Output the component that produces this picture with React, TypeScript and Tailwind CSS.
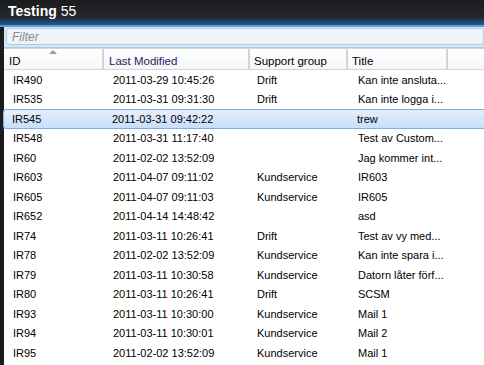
const rows: [string, string, string, string][] = [
  ['IR490', '2011-03-29 10:45:26', 'Drift', 'Kan inte ansluta...'],
  ['IR535', '2011-03-31 09:31:30', 'Drift', 'Kan inte logga i...'],
  ['IR545', '2011-03-31 09:42:22', '', 'trew'],
  ['IR548', '2011-03-31 11:17:40', '', 'Test av Custom...'],
  ['IR60', '2011-02-02 13:52:09', '', 'Jag kommer int...'],
  ['IR603', '2011-04-07 09:11:02', 'Kundservice', 'IR603'],
  ['IR605', '2011-04-07 09:11:03', 'Kundservice', 'IR605'],
  ['IR652', '2011-04-14 14:48:42', '', 'asd'],
  ['IR74', '2011-03-11 10:26:41', 'Drift', 'Test av vy med...'],
  ['IR78', '2011-02-02 13:52:09', 'Kundservice', 'Kan inte spara i...'],
  ['IR79', '2011-03-11 10:30:58', 'Kundservice', 'Datorn låter förf...'],
  ['IR80', '2011-03-11 10:26:41', 'Drift', 'SCSM'],
  ['IR93', '2011-03-11 10:30:00', 'Kundservice', 'Mail 1'],
  ['IR94', '2011-03-11 10:30:01', 'Kundservice', 'Mail 2'],
  ['IR95', '2011-02-02 13:52:09', 'Kundservice', 'Mail 1'],
];

const SELECTED = 'IR545';

export default function App() {
  return (
    <div
      className="w-[484px] h-[365px] overflow-hidden bg-[#1c1c1c] flex flex-col text-[11px] text-black"
      style={{ fontFamily: '"Liberation Sans", Arial, sans-serif' }}
    >
      {/* title bar */}
      <div className="h-[27px] shrink-0 flex items-center pl-[8px] pb-[2px] bg-gradient-to-b from-[#1c1c1c] via-[#24272c] via-70% to-[#1d5aa3] border-b-[2px] border-[#5f9bd3] text-white text-[14px]">
        <span className="font-bold">Testing</span>
        <span className="ml-[4px]">55</span>
      </div>

      <div className="flex-1 ml-[4px] bg-white flex flex-col">
        {/* filter */}
        <div className="h-[21px] shrink-0 bg-[#d6e6f3] pt-[1px] pb-[2px] pl-[2px] border-b border-[#a9cbe6]">
          <div className="h-full rounded-[3px] border border-[#b5cde3] bg-[#edf3f9] flex items-center pl-[5px] italic text-[#8a8a8a] text-[12px]">
            Filter
          </div>
        </div>

        {/* header */}
        <div className="relative h-[22px] shrink-0 flex border-t border-[#7c7c7c] border-b border-[#d5d5d5] bg-gradient-to-b from-white to-[#f4f6f9] text-[11.5px]">
          <div className="absolute left-[45px] top-[1px] w-0 h-0 border-l-[4px] border-r-[4px] border-b-[4px] border-l-transparent border-r-transparent border-b-[#9a9a9a]" />
          <div className="w-[100px] flex items-center pl-[5px] pt-[6px] border-r-[2px] border-[#d3d3d3]">ID</div>
          <div className="w-[146px] flex items-center pl-[5px] pt-[6px] border-r-[2px] border-[#d3d3d3] text-[#2a1a60]">Last Modified</div>
          <div className="w-[98px] flex items-center pl-[4px] pt-[6px] border-r-[2px] border-[#d3d3d3]">Support group</div>
          <div className="w-[100px] flex items-center pl-[4px] pt-[6px] border-r-[2px] border-[#d3d3d3]">Title</div>
          <div className="flex-1" />
        </div>

        {/* rows */}
        <div className="flex flex-col">
          {rows.map(([id, date, group, title]) => (
            <div
              key={id}
              className={
                id === SELECTED
                  ? 'h-[19.5px] flex items-center rounded-l-[3px] border border-r-0 border-[#84acdd] bg-gradient-to-b from-[#e4effb] to-[#c9defa] -ml-px'
                  : 'h-[19.5px] flex items-center border border-transparent'
              }
            >
              <div className="w-[100px] pl-[8px] truncate">{id}</div>
              <div className="w-[146px] pl-[8px]">{date}</div>
              <div className="w-[100px] pl-[6px]">{group}</div>
              <div className="w-[100px] pl-[7px] whitespace-nowrap">{title}</div>
            </div>
          ))}
        </div>
      </div>
    </div>
  );
}
